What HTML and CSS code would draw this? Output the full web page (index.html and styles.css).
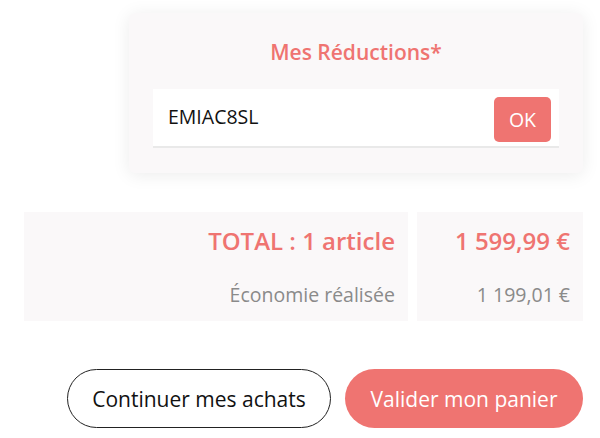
FILE: index.html
```html
<!DOCTYPE html>
<html lang="fr">
<head>
<meta charset="utf-8">
<link rel="stylesheet" href="styles.css">
</head>
<body>
<div class="page">
  <section class="promo">
    <h2 class="promo-title">Mes Réductions*</h2>
    <div class="promo-field">
      <span class="promo-code">EMIAC8SL</span>
      <button class="promo-ok">OK</button>
    </div>
  </section>

  <section class="totals">
    <div class="totals-labels">
      <div class="total-label">TOTAL : 1 article</div>
      <div class="saving-label">Économie réalisée</div>
    </div>
    <div class="totals-values">
      <div class="total-value">1 599,99 €</div>
      <div class="saving-value">1 199,01 €</div>
    </div>
  </section>

  <div class="actions">
    <button class="btn btn-outline">Continuer mes achats</button>
    <button class="btn btn-primary">Valider mon panier</button>
  </div>
</div>
</body>
</html>
```

FILE: styles.css
```css
* { box-sizing: border-box; }
html, body { margin: 0; background: #fff; }
body {
  font-family: "Open Sans", "Noto Sans", sans-serif;
  color: #111;
}
.page {
  width: 600px;
  padding: 13px 17px 0 24px;
  display: flex;
  flex-direction: column;
}
.promo {
  width: 454px;
  align-self: flex-end;
  background: #faf8f9;
  border-radius: 6px;
  box-shadow: 0 2px 18px rgba(0, 0, 0, 0.08);
  padding: 25px 24px 25px;
}
.promo-title {
  margin: 0;
  text-align: center;
  font-size: 21px;
  font-weight: 600;
  line-height: 28px;
  color: #ef7471;
}
.promo-field {
  margin-top: 23px;
  height: 59px;
  background: #fff;
  border-bottom: 2px solid #e9e9e9;
  display: flex;
  align-items: flex-start;
  justify-content: space-between;
  padding: 8px 8px 0 15px;
}
.promo-code {
  font-size: 19.5px;
  line-height: 26px;
  margin-top: 7px;
  color: #111;
}
.promo-ok {
  width: 57px;
  height: 45px;
  border: none;
  border-radius: 5px;
  background: #ef7471;
  color: #fff;
  font-family: inherit;
  font-size: 19.5px;
  padding: 0;
}
.totals {
  margin-top: 39px;
  display: flex;
  gap: 9px;
  height: 109px;
}
.totals-labels, .totals-values {
  background: #faf8f9;
  display: flex;
  flex-direction: column;
  align-items: flex-end;
  padding: 13px 13px 0;
}
.totals-labels { flex: 1; }
.totals-values { width: 166px; }
.total-label, .total-value {
  font-size: 24px;
  font-weight: 600;
  line-height: 32px;
  color: #ef7471;
}
.saving-label, .saving-value {
  margin-top: 25px;
  font-size: 19.5px;
  line-height: 26px;
  color: #8a8a8a;
}
.actions {
  margin-top: 48px;
  display: flex;
  justify-content: flex-end;
  gap: 14px;
}
.btn {
  height: 59px;
  border-radius: 30px;
  font-family: inherit;
  font-size: 21px;
  padding: 0;
}
.btn-outline {
  width: 264px;
  background: #fff;
  border: 1px solid #222;
  color: #111;
}
.btn-primary {
  width: 238px;
  background: #ef7471;
  border: none;
  color: #fff;
}
```
